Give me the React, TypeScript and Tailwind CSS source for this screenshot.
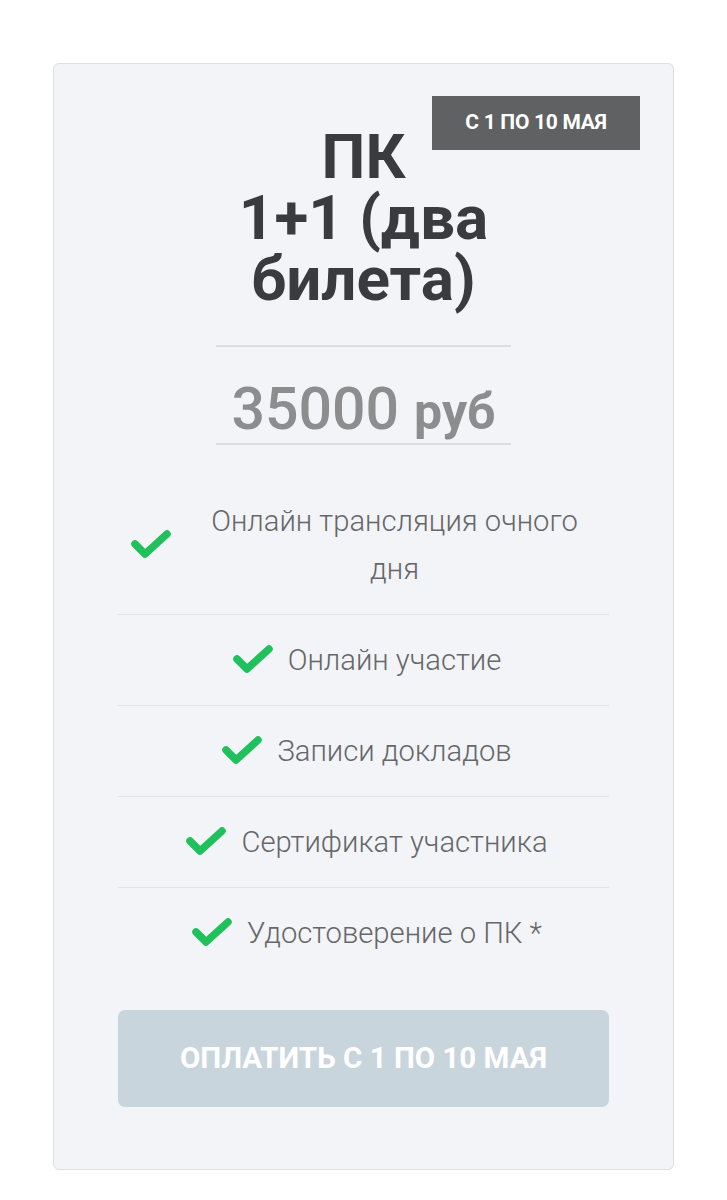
const features = [
  "Онлайн трансляция очного дня",
  "Онлайн участие",
  "Записи докладов",
  "Сертификат участника",
  "Удостоверение о ПК *",
];

const Check = () => (
  <svg
    viewBox="0 0 42 32"
    className="w-[42px] h-[32px] shrink-0 ml-[6px] mr-[14px]"
    fill="none"
    stroke="#20c05c"
    strokeWidth="7.5"
    strokeLinecap="round"
    strokeLinejoin="round"
  >
    <path d="M5 15 L15 25 L37 5" />
  </svg>
);

export default function App() {
  return (
    <div className="bg-white px-[53px] pt-[63px] pb-[30px] font-['Roboto',sans-serif]">
      <div className="relative bg-[#f3f4f8] border border-[#dedfe2] rounded-[6px] px-[64px] pt-[62px] pb-[62px]">
        <div className="absolute top-[32px] right-[33px] w-[208px] h-[54px] bg-[#606163] flex items-center justify-center text-white font-bold text-[21px] tracking-[-0.3px]">
          С 1 ПО 10 МАЯ
        </div>

        <h2 className="text-center font-bold text-[62px] leading-[61px] text-[#3a3b3f]">
          ПК
          <br />
          1+1 (два
          <br />
          билета)
        </h2>

        <div className="mx-auto w-[295px] mt-[36px] border-t-2 border-b-2 border-[#dcdde0] pt-[32px] pb-[4px] flex justify-center items-baseline gap-[15px] text-[#8d8d8f]">
          <span className="text-[59px] leading-[60px] font-medium">35000</span>
          <span className="text-[50px] leading-[50px] font-bold">руб</span>
        </div>

        <ul className="mt-[31px]">
          {features.map((f, i) => (
            <li
              key={f}
              className={`flex items-center justify-center px-[6px] py-[21px] ${
                i < features.length - 1 ? "border-b border-[#e2e3e6]" : ""
              }`}
            >
              <Check />
              <span className="text-center font-light text-[29.2px] leading-[48px] text-[#66676a]">
                {f}
              </span>
            </li>
          ))}
        </ul>

        <button className="mt-[32px] w-full h-[97px] rounded-[7px] bg-[#c9d5dd] text-white font-bold text-[29.5px] uppercase">
          Оплатить с 1 по 10 мая
        </button>
      </div>
    </div>
  );
}
